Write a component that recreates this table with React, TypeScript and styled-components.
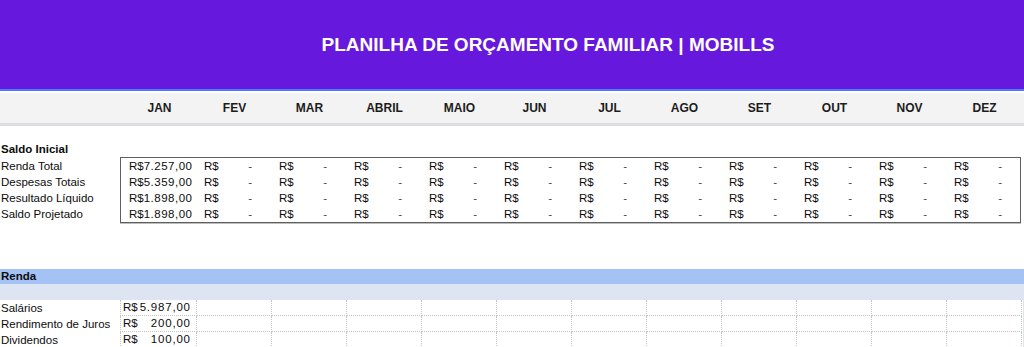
import styled, { createGlobalStyle } from 'styled-components';

const MONTHS = ['JAN', 'FEV', 'MAR', 'ABRIL', 'MAIO', 'JUN', 'JUL', 'AGO', 'SET', 'OUT', 'NOV', 'DEZ'];

const SALDO = [
  { label: 'Renda Total', jan: '7.257,00' },
  { label: 'Despesas Totais', jan: '5.359,00' },
  { label: 'Resultado Líquido', jan: '1.898,00' },
  { label: 'Saldo Projetado', jan: '1.898,00' },
];

const RENDA = [
  { label: 'Salários', jan: '5.987,00' },
  { label: 'Rendimento de Juros', jan: '200,00' },
  { label: 'Dividendos', jan: '100,00' },
];

const GlobalStyle = createGlobalStyle`
  body {
    margin: 0;
    font-family: "Liberation Sans", Arial, sans-serif;
    color: #0c0c0c;
    background: #fff;
  }
`;

const Page = styled.div`
  width: 1024px;
  height: 347px;
  overflow: hidden;
`;

const Header = styled.header`
  height: 91px;
  background: #6718dd;
  border-bottom: 2px solid #4d7ef0;
  display: flex;
  align-items: center;
  justify-content: center;
  padding-left: 72px;
  box-sizing: border-box;
`;

const Title = styled.h1`
  margin: 0;
  font-size: 19px;
  font-weight: bold;
  color: #fff;
`;

const MonthBar = styled.div`
  height: 33px;
  margin-top: 2px;
  background: #f3f3f3;
  border-bottom: 3px solid #dcdde3;
  box-sizing: border-box;
  display: grid;
  grid-template-columns: 122px repeat(12, 75px);
  align-items: center;
`;

const Month = styled.div`
  font-size: 12px;
  font-weight: bold;
  text-align: center;
  color: #1c1c1c;
`;

const SaldoSection = styled.section`
  margin-top: 15px;
  display: grid;
  grid-template-columns: 120px 901px;
  grid-template-rows: 16px auto;
`;

const SectionTitle = styled.div`
  grid-column: 1 / -1;
  font-size: 11.5px;
  font-weight: bold;
  line-height: 16px;
  padding-left: 1px;
`;

const Labels = styled.div`
  display: flex;
  flex-direction: column;
  padding-top: 1px;
`;

const Label = styled.div`
  height: 16px;
  line-height: 16px;
  font-size: 11.5px;
  padding-left: 1px;
  white-space: nowrap;
`;

const Box = styled.div`
  border: 1px solid #5f5f5f;
  box-shadow: 0 1px 0 #bdbdbd;
`;

const BoxRow = styled.div`
  display: grid;
  grid-template-columns: repeat(12, 75px);
  height: 16px;
`;

const Money = styled.div<{ $pad: number }>`
  display: flex;
  justify-content: space-between;
  font-size: 11.5px;
  line-height: 16px;
  padding: 0 ${(p) => p.$pad}px 0 8px;
  white-space: pre;
`;

const Num = styled.span<{ $ls: number }>`
  letter-spacing: ${(p) => p.$ls}px;
  margin-right: -${(p) => p.$ls}px;
`;

const Dash = styled.span`
  color: #444;
`;

const BlueBand = styled.div`
  margin-top: 46px;
  height: 15px;
  background: #a4c2f4;
  font-size: 11.5px;
  font-weight: bold;
  line-height: 15px;
  padding-left: 1px;
`;

const LightBand = styled.div`
  height: 16px;
  background: #dce5f1;
`;

const GridRow = styled.div`
  display: grid;
  grid-template-columns: 120px 77px repeat(11, 75px) 1fr;
  height: 16px;
`;

const GridCell = styled.div`
  border-right: 1px dotted #c4c4c4;
  border-bottom: 1px dotted #c4c4c4;
  box-sizing: border-box;
`;

const EdgeCell = styled.div`
  background: #dce5f1;
  margin-left: 1px;
`;

const MoneyCell = styled(GridCell)`
  display: flex;
  justify-content: space-between;
  font-size: 11.5px;
  line-height: 15px;
  padding: 0 6px 0 2px;
  border-left: 1px dotted #c4c4c4;
`;

export default function App() {
  return (
    <Page>
      <GlobalStyle />
      <Header>
        <Title>PLANILHA DE ORÇAMENTO FAMILIAR | MOBILLS</Title>
      </Header>

      <MonthBar>
        <div />
        {MONTHS.map((m) => (
          <Month key={m}>{m}</Month>
        ))}
      </MonthBar>

      <SaldoSection>
        <SectionTitle>Saldo Inicial</SectionTitle>
        <Labels>
          {SALDO.map((r) => (
            <Label key={r.label}>{r.label}</Label>
          ))}
        </Labels>
        <Box>
          {SALDO.map((r) => (
            <BoxRow key={r.label}>
              <Money $pad={5}>
                <span>R$</span>
                <Num $ls={0.5}>{r.jan}</Num>
              </Money>
              {MONTHS.slice(1).map((m) => (
                <Money key={m} $pad={19}>
                  <span>R$</span>
                  <Dash>-</Dash>
                </Money>
              ))}
            </BoxRow>
          ))}
        </Box>
      </SaldoSection>

      <BlueBand>Renda</BlueBand>
      <LightBand />

      {RENDA.map((r) => (
        <GridRow key={r.label}>
          <Label>{r.label}</Label>
          <MoneyCell>
            <span>R$</span>
            <Num $ls={0.8}>{r.jan}</Num>
          </MoneyCell>
          {MONTHS.slice(1).map((m) => (
            <GridCell key={m} />
          ))}
          <EdgeCell />
        </GridRow>
      ))}
    </Page>
  );
}
